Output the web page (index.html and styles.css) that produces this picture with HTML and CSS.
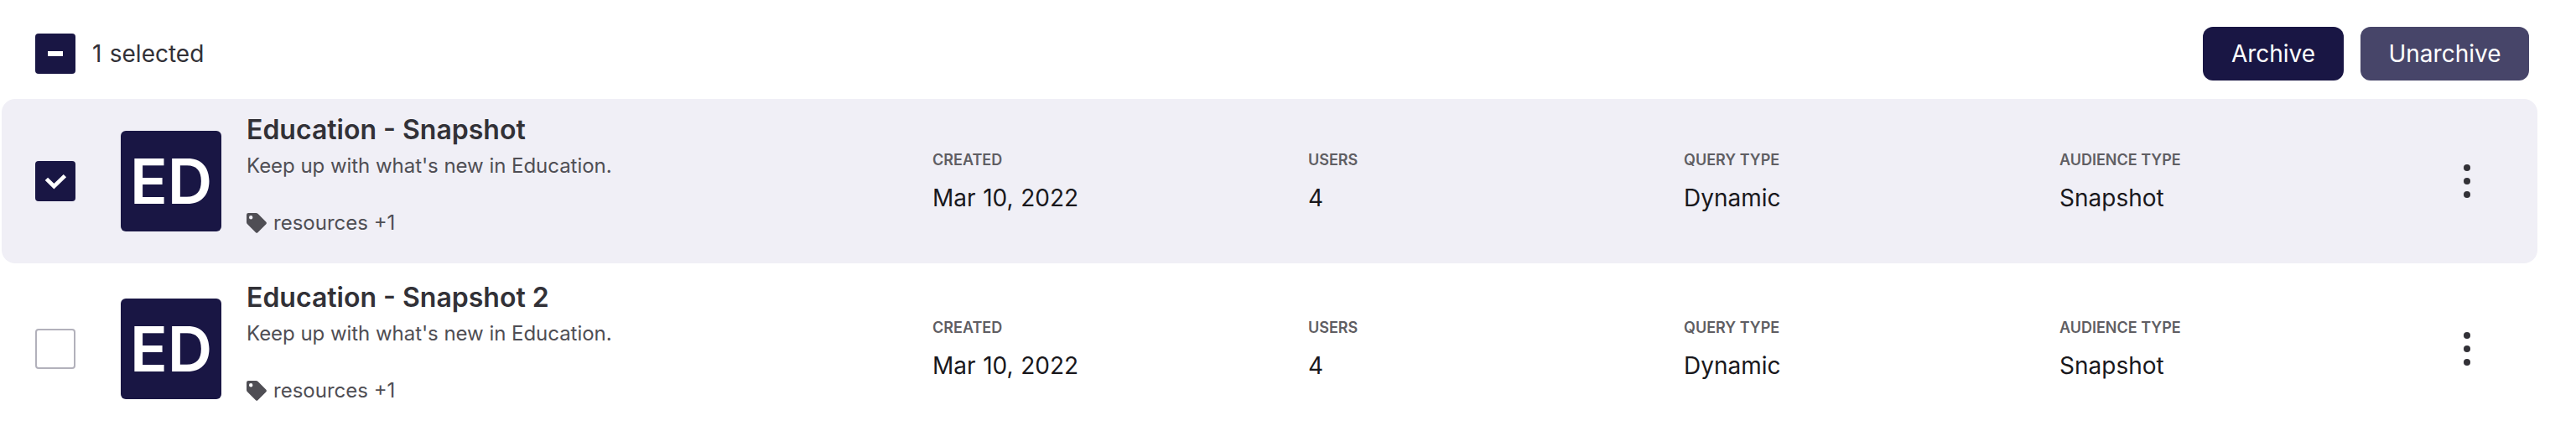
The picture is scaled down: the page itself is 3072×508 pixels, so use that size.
FILE: index.html
```html
<!DOCTYPE html>
<html lang="en">
<head>
  <meta charset="UTF-8" />
  <meta name="viewport" content="width=device-width, initial-scale=1.0"/>
  <title>Audiences</title>
  <link rel="stylesheet" href="styles.css">
</head>
<body>
  <div class="toolbar">
    <button class="checkbox checked" aria-label="Deselect all">
      <svg width="48" height="48" viewBox="0 0 48 48"><rect x="15" y="21" width="18" height="6" fill="#fff"/></svg>
    </button>
    <span class="selected-count">1 selected</span>
    <button class="btn">Archive</button>
    <button class="btn btn-light">Unarchive</button>
  </div>

  <div class="list">
    <div class="row selected">
      <button class="checkbox checked" aria-label="Deselect">
        <svg width="48" height="48" viewBox="0 0 48 48"><path d="M13.4 21.4 L22.4 30.2 L35.4 17.6" fill="none" stroke="#fff" stroke-width="4.8"/></svg>
      </button>
      <div class="avatar">ED</div>
      <div class="info">
        <h2>Education - Snapshot</h2>
        <p>Keep up with what's new in Education.</p>
        <div class="tags">
          <svg width="24" height="24" viewBox="0 0 24 24"><path fill="#4f4e54" fill-rule="evenodd" d="M0 2.2 A2.2 2.2 0 0 1 2.2 0 H11.2 Q12.7 0 13.7 1 L23.4 10.7 Q24.4 12 23.4 13.2 L13.4 23.3 Q12.2 24.4 11 23.3 L1 13.3 Q0 12.3 0 11 Z M5.2 3 A2.2 2.2 0 1 0 5.2 7.4 A2.2 2.2 0 1 0 5.2 3 Z"/></svg>
          <span>resources +1</span>
        </div>
      </div>
      <div class="field"><label>CREATED</label><span>Mar 10, 2022</span></div>
      <div class="field"><label>USERS</label><span>4</span></div>
      <div class="field"><label>QUERY TYPE</label><span>Dynamic</span></div>
      <div class="field"><label>AUDIENCE TYPE</label><span>Snapshot</span></div>
      <button class="menu" aria-label="More">
        <svg width="8" height="40" viewBox="0 0 8 40" fill="#323137"><circle cx="4" cy="4" r="4"/><circle cx="4" cy="20" r="4"/><circle cx="4" cy="36" r="4"/></svg>
      </button>
    </div>

    <div class="row">
      <button class="checkbox" aria-label="Select"></button>
      <div class="avatar">ED</div>
      <div class="info">
        <h2>Education - Snapshot 2</h2>
        <p>Keep up with what's new in Education.</p>
        <div class="tags">
          <svg width="24" height="24" viewBox="0 0 24 24"><path fill="#4f4e54" fill-rule="evenodd" d="M0 2.2 A2.2 2.2 0 0 1 2.2 0 H11.2 Q12.7 0 13.7 1 L23.4 10.7 Q24.4 12 23.4 13.2 L13.4 23.3 Q12.2 24.4 11 23.3 L1 13.3 Q0 12.3 0 11 Z M5.2 3 A2.2 2.2 0 1 0 5.2 7.4 A2.2 2.2 0 1 0 5.2 3 Z"/></svg>
          <span>resources +1</span>
        </div>
      </div>
      <div class="field"><label>CREATED</label><span>Mar 10, 2022</span></div>
      <div class="field"><label>USERS</label><span>4</span></div>
      <div class="field"><label>QUERY TYPE</label><span>Dynamic</span></div>
      <div class="field"><label>AUDIENCE TYPE</label><span>Snapshot</span></div>
      <button class="menu" aria-label="More">
        <svg width="8" height="40" viewBox="0 0 8 40" fill="#323137"><circle cx="4" cy="4" r="4"/><circle cx="4" cy="20" r="4"/><circle cx="4" cy="36" r="4"/></svg>
      </button>
    </div>
  </div>
</body>
</html>
```
FILE: styles.css
```css
* {
  box-sizing: border-box;
  font-family: 'Inter', sans-serif;
}
body {
  background: #ffffff;
  color: #323137;
  margin: 0;
  padding: 32px 46px 0 2px;
}
button {
  padding: 0;
  border: none;
  background: none;
  cursor: pointer;
}
.toolbar {
  display: flex;
  align-items: center;
  height: 64px;
  padding: 0 10px 0 40px;
}
.checkbox {
  flex: none;
  width: 48px;
  height: 48px;
  border: 2px solid #b2b1bb;
  border-radius: 4px;
}
.checkbox.checked {
  border: none;
  background: #191644;
}
.checkbox svg {
  display: block;
}
.selected-count {
  margin-left: 20px;
  margin-right: auto;
  font-size: 28px;
  word-spacing: 1.5px;
}
.btn {
  width: 168px;
  height: 64px;
  border-radius: 12px;
  background: #191644;
  color: #ffffff;
  font-size: 28px;
}
.btn-light {
  width: 201px;
  margin-left: 20px;
  background: #474569;
}
.list {
  display: flex;
  flex-direction: column;
  gap: 4px;
  margin-top: 22px;
}
.row {
  display: flex;
  align-items: center;
  height: 196px;
  padding-left: 40px;
  border-radius: 16px;
}
.row.selected {
  background: #f0eff6;
}
.avatar {
  flex: none;
  width: 120px;
  height: 120px;
  margin-left: 54px;
  border-radius: 6px;
  background: #191644;
  color: #ffffff;
  font-size: 74px;
  font-weight: 600;
  line-height: 120px;
  text-align: center;
}
.info {
  flex: none;
  align-self: flex-start;
  width: 818px;
  margin-left: 30px;
  padding-top: 17px;
}
.info h2 {
  margin: 0;
  font-size: 32px;
  font-weight: 600;
  line-height: 40px;
}
.info p {
  margin: 5px 0 0;
  color: #4f4e54;
  font-size: 24px;
  letter-spacing: -0.04px;
  line-height: 36px;
}
.tags {
  display: flex;
  align-items: center;
  gap: 8px;
  margin-top: 32px;
  color: #4f4e54;
  font-size: 24px;
  line-height: 36px;
}
.field {
  flex: none;
  display: flex;
  flex-direction: column;
  width: 448px;
}
.field label {
  color: #5f5e63;
  font-size: 18px;
  font-weight: 600;
  line-height: 24px;
}
.field span {
  margin-top: 15px;
  color: #19181c;
  font-size: 28px;
  line-height: 36px;
  word-spacing: 0.75px;
}
.menu {
  margin-left: 34px;
}
.menu svg {
  display: block;
}
```
